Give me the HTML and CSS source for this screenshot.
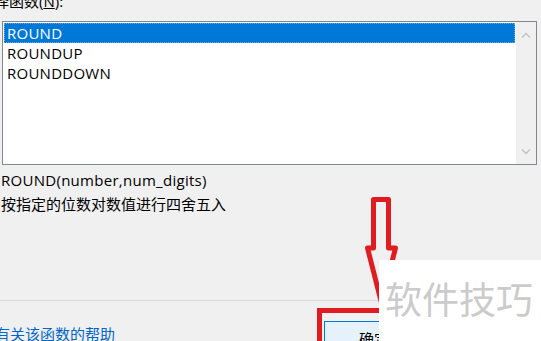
FILE: index.html
```html
<!DOCTYPE html>
<html lang="zh">
<head>
<meta charset="utf-8">
<link rel="stylesheet" href="styles.css">
</head>
<body>
<div class="dialog">
  <div class="label">选择函数(<u>N</u>):</div>
  <div class="listbox">
    <ul class="items">
      <li class="sel">ROUND</li>
      <li>ROUNDUP</li>
      <li>ROUNDDOWN</li>
    </ul>
    <div class="scrollbar">
      <svg class="chev" width="10" height="6" viewBox="0 0 10 6"><path d="M1 5.5 L5 1.5 L9 5.5" fill="none" stroke="#c2c2c2" stroke-width="1.4"/></svg>
      <svg class="chev" width="10" height="6" viewBox="0 0 10 6"><path d="M1 0.5 L5 4.5 L9 0.5" fill="none" stroke="#c2c2c2" stroke-width="1.4"/></svg>
    </div>
  </div>
  <div class="syntax">ROUND(number,num_digits)</div>
  <div class="desc">按指定的位数对数值进行四舍五入</div>
  <div class="sep"></div>
  <div class="footer">
    <a class="help" href="#">有关该函数的帮助</a>
    <button class="ok">确定</button>
  </div>
</div>
<svg class="arrow" width="60" height="130" viewBox="350 190 60 130">
  <polygon points="373.5,199.5 388.5,199.5 388.5,248 395.5,248 381.5,303 367.5,248 373.5,248" fill="none" stroke="#e11b22" stroke-width="5" stroke-linejoin="round"/>
</svg>
<div class="annot-box"></div>
<div class="watermark">软件技巧</div>
</body>
</html>
```
FILE: styles.css
```css
html, body {
  margin: 0;
  padding: 0;
}
body {
  width: 541px;
  height: 341px;
  overflow: hidden;
  background: #f0f0f0;
  position: relative;
  font-family: "Open Sans", "Noto Sans CJK SC", sans-serif;
  font-size: 15px;
  color: #000;
}
.dialog {
  display: flex;
  flex-direction: column;
}
.label {
  line-height: 20px;
  margin-top: -9px;
  margin-left: -21px;
}
.label u {
  text-decoration-thickness: 1px;
}
.listbox {
  margin-top: 10px;
  margin-left: 2px;
  width: 533px;
  height: 142px;
  border: 1px solid #828790;
  background: #fff;
  display: flex;
}
.items {
  list-style: none;
  margin: 0;
  padding: 1px;
  flex: 1;
}
.items li {
  height: 20px;
  line-height: 20px;
  padding-left: 3px;
  white-space: nowrap;
  letter-spacing: 0.25px;
}
.items li.sel {
  background: #0078d7;
  color: #fff;
  outline: 1px dotted #6fa8dc;
  outline-offset: -1px;
}
.scrollbar {
  width: 20px;
  background: #f0f0f0;
  display: flex;
  flex-direction: column;
  justify-content: space-between;
  align-items: center;
  padding: 10px 0 9px;
  box-sizing: border-box;
}
.syntax {
  margin-top: 5px;
  line-height: 20px;
  margin-left: 1px;
  letter-spacing: 0.28px;
}
.desc {
  margin-top: 4px;
  line-height: 20px;
  margin-left: 1px;
}
.sep {
  margin-top: 86px;
  height: 1px;
  background: #dadada;
}
.footer {
  display: grid;
  grid-template-columns: 324px 100px;
  align-items: start;
}
.help {
  margin-top: 23px;
  margin-left: -5px;
  line-height: 20px;
  color: #0066cc;
  text-decoration: underline;
  text-underline-offset: 2px;
  white-space: nowrap;
}
.ok {
  margin-top: 20px;
  width: 100px;
  height: 30px;
  border: 1px solid #0078d7;
  background: #e5f1fb;
  font: inherit;
  padding: 6px 0 0;
  line-height: 20px;
  box-sizing: border-box;
}
.arrow {
  position: absolute;
  left: 350px;
  top: 190px;
}
.annot-box {
  position: absolute;
  left: 317px;
  top: 308px;
  width: 200px;
  height: 80px;
  border: 5px solid #e11b22;
}
.watermark {
  position: absolute;
  left: 379px;
  top: 260px;
  right: 0;
  bottom: 0;
  background: #fff;
  color: #cbcbcb;
  font-family: "Noto Sans CJK SC", sans-serif;
  font-size: 37px;
  line-height: 40px;
  padding: 18px 0 0 6px;
  white-space: nowrap;
}
```
